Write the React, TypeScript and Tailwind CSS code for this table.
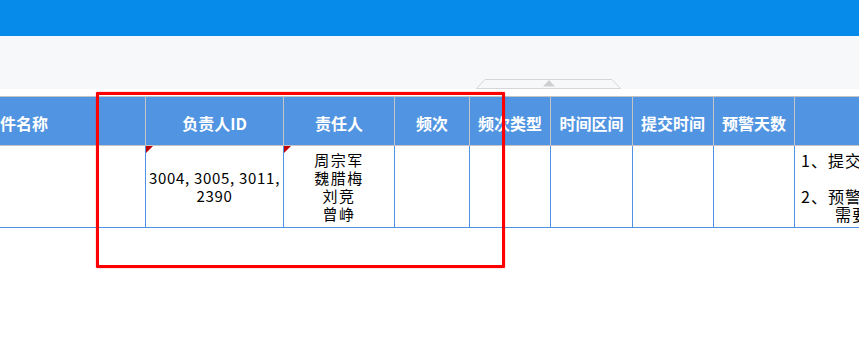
import React from "react";

type Col = { title: string; width: string };

const columns: Col[] = [
  { title: "文件名称", width: "w-[259px] -ml-[113px]" },
  { title: "负责人ID", width: "w-[138px]" },
  { title: "责任人", width: "w-[111px]" },
  { title: "频次", width: "w-[75px]" },
  { title: "频次类型", width: "w-[81px]" },
  { title: "时间区间", width: "w-[82px]" },
  { title: "提交时间", width: "w-[81px]" },
  { title: "预警天数", width: "w-[81px]" },
  { title: "备注说明", width: "w-[320px]" },
];

// little red triangle marking a cell that has a comment
function CommentMark() {
  return (
    <svg className="absolute left-0 top-0" width="7" height="7" viewBox="0 0 7 7">
      <polygon points="0,0 7,0 0,7" fill="#c00000" />
    </svg>
  );
}

function CollapseTab() {
  return (
    <svg width="145" height="11" viewBox="0 0 145 11">
      <polygon
        points="0.5,10.5 9,1.5 136,1.5 144.5,10.5"
        fill="#f7f8fa"
        stroke="#d6d6d6"
        strokeWidth="1"
      />
      <polygon points="67,8.5 73,2 79,8.5" fill="#cfcfcf" />
    </svg>
  );
}

export default function App() {
  const body = [
    null,
    (
      <div className="relative flex h-full flex-col items-center justify-center text-[15px] leading-[18px] tracking-[0.7px]">
        <CommentMark />
        <span>3004, 3005, 3011,</span>
        <span>2390</span>
      </div>
    ),
    (
      <div className="relative flex h-full flex-col items-center justify-center text-[15px] leading-[18px] tracking-[1.5px]">
        <CommentMark />
        <span>周宗军</span>
        <span>魏腊梅</span>
        <span>刘竞</span>
        <span>曾峥</span>
      </div>
    ),
    null,
    null,
    null,
    null,
    null,
    (
      <div className="flex h-full flex-col justify-center whitespace-nowrap pl-[6px] text-[16px] leading-[18px] tracking-[1px]">
        <span>1、提交时间为每月5日前</span>
        <span>&nbsp;</span>
        <span>2、预警天数为提前3天提醒，</span>
        <span className="pl-[34px]">需要及时处理</span>
      </div>
    ),
  ];

  return (
    <div
      className="relative h-[348px] w-[859px] overflow-hidden bg-white text-black"
      style={{ fontFamily: '"Noto Sans CJK SC", "Noto Sans", sans-serif' }}
    >
      <div className="h-[36px] bg-[#078bea]" />
      <div className="flex h-[53px] items-end bg-[#f7f8fa] pl-[476px]">
        <CollapseTab />
      </div>
      <div className="h-[7px]" />

      {/* header row */}
      <div className="flex h-[50px] border-y border-[#c4c4c4] bg-[#5194e1]">
        {columns.map((c) => (
          <div
            key={c.title}
            className={`${c.width} flex shrink-0 items-center justify-center border-r border-[#c4c4c4] pt-[3px] text-[16px] font-bold text-white`}
          >
            {c.title === "备注说明" ? "" : c.title}
          </div>
        ))}
      </div>

      {/* data row */}
      <div className="flex h-[82px] border-b border-[#4d92e3]">
        {columns.map((c, i) => (
          <div
            key={c.title}
            className={`${c.width} shrink-0 overflow-hidden border-r border-[#4d92e3]`}
          >
            {body[i]}
          </div>
        ))}
      </div>

      {/* highlight frame */}
      <div className="pointer-events-none absolute left-[96px] top-[92px] h-[176px] w-[409px] rounded-[1px] border-[3px] border-[#ff0000] shadow-[0_0_1px_#ff0000]" />
    </div>
  );
}
